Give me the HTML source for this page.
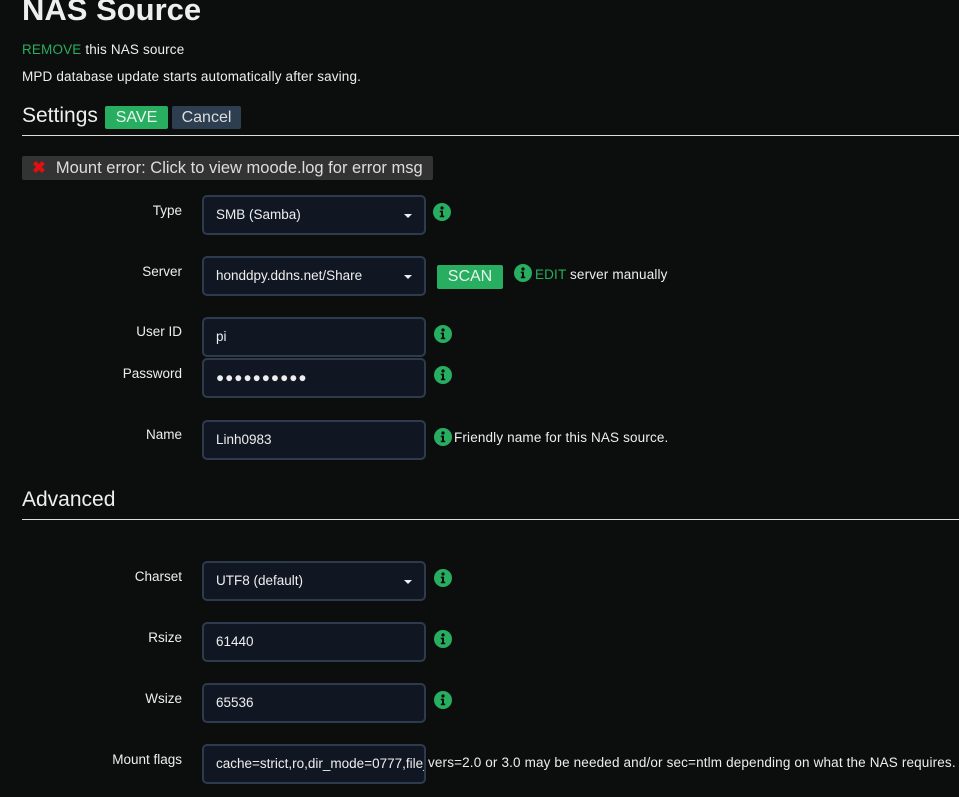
<!DOCTYPE html>
<html><head><meta charset="utf-8"><style>
*{margin:0;padding:0;box-sizing:border-box}
body{width:959px;height:797px;background:#0c0d0d;color:#eee;font-family:"Liberation Sans",sans-serif;position:relative;overflow:hidden}
.a{position:absolute;white-space:nowrap}
.t{font-size:13.5px;letter-spacing:0.15px}
.g{color:#27ae60}
.lbl{position:absolute;font-size:13.5px;text-align:right;width:120px;left:62px}
.inp{position:absolute;left:202px;width:224px;height:40px;background:#111722;border:2px solid #2d3b4c;border-radius:5px;font-size:13.5px;padding:0 0 0 12px;line-height:36px;overflow:hidden;color:#eee}
.sel:after{content:"";position:absolute;right:12px;top:17px;border-left:4px solid transparent;border-right:4px solid transparent;border-top:4px solid #eee}
.i{position:absolute;width:18px;height:18px}
.hr{position:absolute;left:22px;right:0;height:1px;background:#ddd}
</style></head><body>
<div class="a" style="left:22px;top:-8px;font-size:31px;font-weight:bold">NAS Source</div>
<div class="a t" style="left:22px;top:42px"><span class="g">REMOVE</span> this NAS source</div>
<div class="a t" style="left:22px;top:69px">MPD database update starts automatically after saving.</div>
<div class="a" style="left:22px;top:104px;font-size:21px">Settings</div>
<div class="a" style="left:105px;top:106px;width:63px;height:23px;background:#27ae60;border-radius:2px;color:#e8f5ec;font-size:16px;text-align:center;line-height:23px">SAVE</div>
<div class="a" style="left:172px;top:106px;width:69px;height:23px;background:#2c3e50;border-radius:2px;color:#ddd;font-size:16px;text-align:center;line-height:23px">Cancel</div>
<div class="hr" style="top:135px"></div>
<div class="a" style="left:22px;top:156px;width:411px;height:24px;background:#333;border-radius:2px;font-size:16.5px;line-height:24px;color:#ddd;padding-left:10px"><span style="color:#e01010;font-weight:bold;margin-right:10px">✖</span>Mount error: Click to view moode.log for error msg</div>

<div class="lbl" style="top:203px">Type</div>
<div class="inp sel" style="top:195px">SMB (Samba)</div>
<div class="lbl" style="top:264px">Server</div>
<div class="inp sel" style="top:256px">honddpy.ddns.net/Share</div>
<div class="a" style="left:437px;top:265px;width:66px;height:24px;background:#27ae60;border-radius:2px;color:#e8f5ec;font-size:16px;text-align:center;line-height:24px">SCAN</div>
<div class="a t" style="left:535px;top:267px"><span class="g">EDIT</span> server manually</div>
<div class="lbl" style="top:324px">User ID</div>
<div class="inp" style="top:317px">pi</div>
<div class="lbl" style="top:366px">Password</div>
<div class="inp" style="top:358px;letter-spacing:1px">●●●●●●●●●●</div>
<div class="lbl" style="top:427px">Name</div>
<div class="inp" style="top:420px">Linh0983</div>
<div class="a t" style="left:454px;top:430px">Friendly name for this NAS source.</div>

<div class="a" style="left:22px;top:488px;font-size:21px">Advanced</div>
<div class="hr" style="top:519px"></div>
<div class="lbl" style="top:569px">Charset</div>
<div class="inp sel" style="top:561px">UTF8 (default)</div>
<div class="lbl" style="top:630px">Rsize</div>
<div class="inp" style="top:622px">61440</div>
<div class="lbl" style="top:691px">Wsize</div>
<div class="inp" style="top:683px">65536</div>
<div class="lbl" style="top:752px">Mount flags</div>
<div class="inp" style="top:744px;white-space:nowrap">cache=strict,ro,dir_mode=0777,file_mode=0777</div>
<div class="a t" style="left:428px;top:755px">vers=2.0 or 3.0 may be needed and/or sec=ntlm depending on what the NAS requires.</div>

<svg width="0" height="0" style="position:absolute"><defs><symbol id="ic" viewBox="0 0 18 18"><circle cx="9" cy="9" r="9" fill="#27ae60"/><circle cx="9" cy="5" r="1.6" fill="#0c0d0d"/><path d="M6.8 7.6h3.2v5h1.2v1.6H6.8v-1.6H8v-3.4H6.8z" fill="#0c0d0d"/></symbol></defs></svg>
<svg class="i" style="left:433px;top:203px"><use href="#ic"/></svg>
<svg class="i" style="left:514px;top:264px"><use href="#ic"/></svg>
<svg class="i" style="left:434px;top:325px"><use href="#ic"/></svg>
<svg class="i" style="left:434px;top:366px"><use href="#ic"/></svg>
<svg class="i" style="left:434px;top:428px"><use href="#ic"/></svg>
<svg class="i" style="left:434px;top:569px"><use href="#ic"/></svg>
<svg class="i" style="left:434px;top:630px"><use href="#ic"/></svg>
<svg class="i" style="left:434px;top:691px"><use href="#ic"/></svg>
</body></html>
